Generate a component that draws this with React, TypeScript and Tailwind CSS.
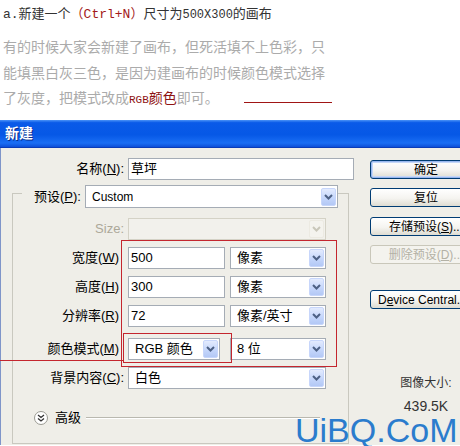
import type { ReactNode } from 'react';

const cjk = "font-['Liberation_Sans','Noto_Sans_CJK_SC',sans-serif]";

function Chevron({ disabled }: { disabled?: boolean }) {
  return (
    <svg width="9" height="6" viewBox="0 0 9 6">
      <path d="M1 1 L4.5 4.5 L8 1" fill="none" stroke={disabled ? '#c9c7ba' : '#4d6185'} strokeWidth="2" />
    </svg>
  );
}

function Select({ value, className, disabled }: { value?: string; className: string; disabled?: boolean }) {
  return (
    <div
      className={`flex h-[22px] items-center border pl-[6px] text-[13px] ${
        disabled ? 'border-[#d4d2c6] bg-[#f2f1ec]' : 'border-[#a5acb5] bg-white'
      } ${className}`}
    >
      <span className="truncate">{value}</span>
      <div
        className={`ml-auto mr-px flex h-[18px] w-[15px] items-center justify-center rounded-[2px] border ${
          disabled
            ? 'border-[#eceae2] bg-[#f4f3ee]'
            : 'border-[#c7d6fb] bg-[linear-gradient(180deg,#e3ebfe_0%,#c3d5fb_60%,#b3c8f5_100%)]'
        }`}
      >
        <Chevron disabled={disabled} />
      </div>
    </div>
  );
}

function Input({ value, className }: { value: string; className: string }) {
  return (
    <div className={`flex h-[22px] items-center border border-[#a5acb5] bg-white pl-[2px] text-[13px] ${className}`}>
      {value}
    </div>
  );
}

function Row({ label, children, className = '', labelClass = '' }: { label: ReactNode; children: ReactNode; className?: string; labelClass?: string }) {
  return (
    <div className={`grid grid-cols-[111px_1fr] items-center gap-x-[4px] ${className}`}>
      <div className={`text-right text-[13px] ${labelClass}`}>{label}</div>
      <div className="flex items-center">{children}</div>
    </div>
  );
}

function XpButton({ children, primary, disabled, className = '' }: { children: ReactNode; primary?: boolean; disabled?: boolean; className?: string }) {
  return (
    <div
      className={`flex h-[19px] w-[112px] items-center justify-center rounded-[3px] border text-[12px] ${
        disabled
          ? 'border-[#c9c7ba] bg-[#f4f3ee] text-[#b3b1a5]'
          : 'border-[#003c74] bg-[linear-gradient(180deg,#ffffff_0%,#f5f4f0_55%,#dedcd2_100%)] text-black'
      } ${primary ? 'shadow-[inset_0_0_0_1px_#98b7ef,inset_0_0_0_2px_#c5d7f7]' : ''} ${className}`}
    >
      {children}
    </div>
  );
}

export default function App() {
  return (
    <div className={`relative h-[446px] w-[460px] overflow-hidden bg-white ${cjk}`}>
      {/* article text above the screenshot */}
      <div className="h-[120px] px-[3px] pt-[5px]">
        <div className="text-[13px] leading-[20px] text-[#333] font-['Liberation_Mono','Noto_Sans_CJK_SC',monospace]">
          a.新建一个<span className="text-[#a31a1a]">（Ctrl+N）</span>尺寸为<span className="text-[12px]">500X300</span>的画布
        </div>
        <div className="mt-[10px] text-[14px] leading-[25.5px] text-[#ababab]">
          有的时候大家会新建了画布，但死活填不上色彩，只
          <br />
          能填黑白灰三色，是因为建画布的时候颜色模式选择
          <br />
          了灰度，把模式改成
          <span className="text-[#8e1212]">
            <span className="font-['Liberation_Mono',monospace] text-[11px]">RGB</span>颜色
          </span>
          即可。
        </div>
      </div>

      {/* title bar */}
      <div className="flex h-[28px] items-center border-b border-[#0a3cb8] bg-[linear-gradient(180deg,#4b93f7_0%,#0a5ae8_10%,#0658e6_55%,#1a6ef4_85%,#0d4fd8_100%)] pl-[5px]">
        <span className="text-[14px] font-bold text-white [text-shadow:1px_1px_0_#0a2a8a]">新建</span>
      </div>

      {/* dialog body */}
      <div className="flex h-[297px] border-l border-[#7f95c9] bg-[#efeee8] text-black">
        <div className="w-[369px] shrink-0 pt-[10px]">
          <div className="grid grid-cols-[123px_1fr] items-center gap-x-[4px]">
            <div className="text-right text-[13px]">
              名称(<u>N</u>):
            </div>
            <Input value="草坪" className="w-[226px]" />
          </div>

          <fieldset className="ml-[11px] mt-[5px] w-[337px] border border-[#c9c8bf] pb-[19px]">
            <legend className="ml-[9px] h-[16px] w-[316px] pl-[12px]">
              <div className="flex items-start gap-[4px]">
                <span className="text-[13px] leading-[23px]">
                  预设(<u>P</u>):
                </span>
                <Select value="Custom" className="h-[23px] w-[253px] !text-[12px]" />
              </div>
            </legend>

            <Row label="Size:" labelClass="text-[#aca899]" className="mt-[17px]">
              <Select className="w-[198px]" disabled />
            </Row>
            <Row label={<>宽度(<u>W</u>)</>} labelClass="pr-[5px]" className="mt-[7px]">
              <Input value="500" className="w-[97px]" />
              <Select value="像素" className="ml-[5px] w-[96px]" />
            </Row>
            <Row label={<>高度(<u>H</u>)</>} labelClass="pr-[5px]" className="mt-[7px]">
              <Input value="300" className="w-[97px]" />
              <Select value="像素" className="ml-[5px] w-[96px]" />
            </Row>
            <Row label={<>分辨率(<u>R</u>)</>} labelClass="pr-[5px]" className="mt-[7px]">
              <Input value="72" className="w-[97px]" />
              <Select value="像素/英寸" className="ml-[5px] w-[96px]" />
            </Row>
            <Row label={<>颜色模式(<u>M</u>)</>} labelClass="pr-[5px]" className="mt-[11px]">
              <Select value="RGB 颜色" className="w-[92px]" />
              <Select value="8 位" className="ml-[10px] w-[96px]" />
            </Row>
            <Row label={<>背景内容(<u>C</u>):</>} className="mt-[7px]">
              <Select value="白色" className="w-[198px]" />
            </Row>

            <div className="ml-[21px] mt-[22px] flex h-[13px] items-center">
              <div className="flex h-[14px] w-[14px] items-center justify-center rounded-full border border-[#9a9a92] bg-white">
                <svg width="8" height="8" viewBox="0 0 8 8">
                  <path d="M1 1 L4 3.5 L7 1 M1 4.5 L4 7 L7 4.5" fill="none" stroke="#333" strokeWidth="1.3" />
                </svg>
              </div>
              <span className="ml-[7px] text-[13px]">高级</span>
              <div className="ml-[5px] h-[2px] w-[234px] border-t border-b border-t-[#b9b8af] border-b-white" />
            </div>
          </fieldset>
        </div>

        <div className="w-[112px] shrink-0 pt-[12px]">
          <XpButton primary>确定</XpButton>
          <XpButton className="mt-[9px]">复位</XpButton>
          <XpButton className="mt-[10px]">
            存储预设(<u>S</u>)...
          </XpButton>
          <XpButton disabled className="mt-[9px]">
            删除预设(<u>D</u>)...
          </XpButton>
          <XpButton className="mt-[26px] justify-start pl-[7px]">
            D<u>e</u>vice Central...
          </XpButton>
          <div className="mt-[66px] text-center text-[12px] leading-[16px] text-[#333]">图像大小:</div>
          <div className="mt-[8px] text-center text-[14px] leading-[15px] text-[#333]">439.5K</div>
        </div>
      </div>

      {/* red annotations drawn over the screenshot */}
      <div className="absolute left-[244px] top-[102px] h-px w-[88px] bg-[#a01515]" />
      <div className="absolute left-[121px] top-[240px] h-[127px] w-[216px] border border-[#c4262e]" />
      <div className="absolute left-[123px] top-[333px] h-[30px] w-[109px] border border-[#c4262e]" />
      <div className="absolute left-0 top-[360px] h-px w-[123px] bg-[#c4262e]" />

      {/* watermark */}
      <div className="absolute left-[295px] top-[416px] text-[34px] leading-[28px] text-[#2b7ccd] font-['Liberation_Sans',sans-serif]">
        UiBQ.CoM
      </div>
    </div>
  );
}
